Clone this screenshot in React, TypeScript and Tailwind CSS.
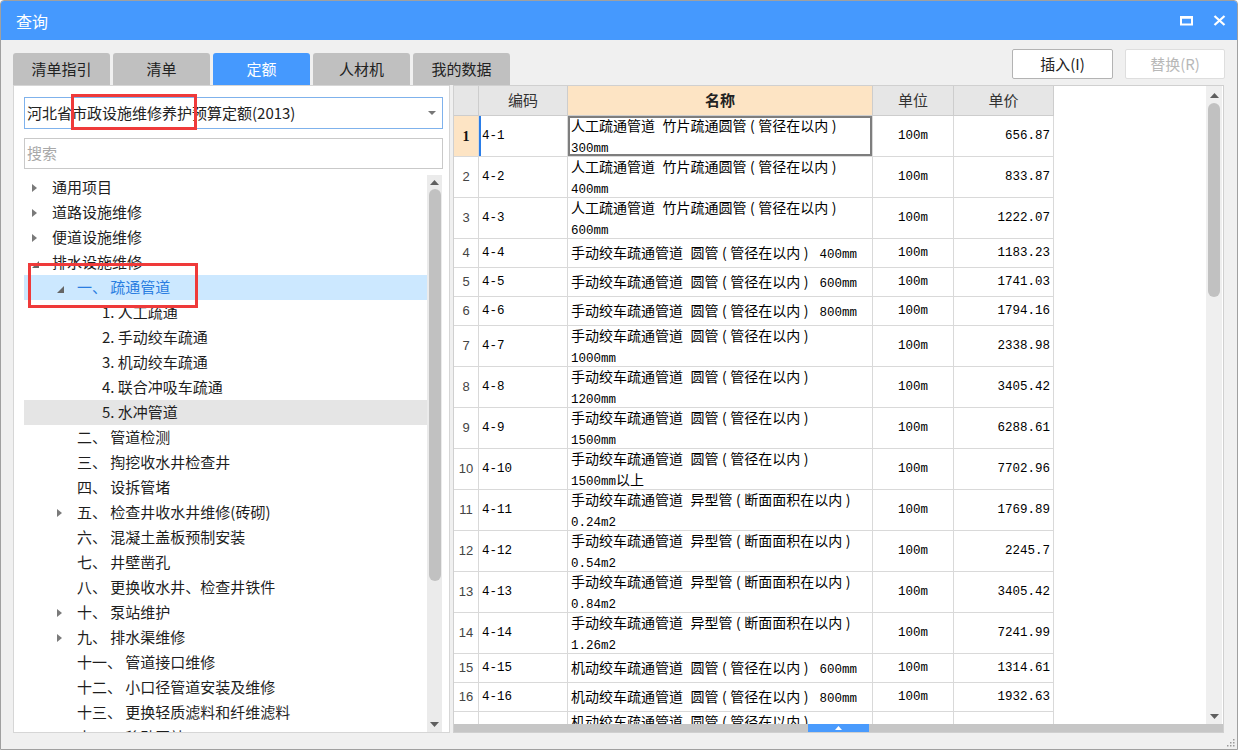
import React from "react";

type TRow = { lv: number; t: string; a?: "c" | "e"; sel?: boolean; hov?: boolean };

const tree: TRow[] = [
  { lv: 0, t: "通用项目", a: "c" },
  { lv: 0, t: "道路设施维修", a: "c" },
  { lv: 0, t: "便道设施维修", a: "c" },
  { lv: 0, t: "排水设施维修", a: "e" },
  { lv: 1, t: "一、 疏通管道", a: "e", sel: true },
  { lv: 2, t: "1. 人工疏通" },
  { lv: 2, t: "2. 手动绞车疏通" },
  { lv: 2, t: "3. 机动绞车疏通" },
  { lv: 2, t: "4. 联合冲吸车疏通" },
  { lv: 2, t: "5. 水冲管道", hov: true },
  { lv: 1, t: "二、 管道检测" },
  { lv: 1, t: "三、 掏挖收水井检查井" },
  { lv: 1, t: "四、 设拆管堵" },
  { lv: 1, t: "五、 检查井收水井维修(砖砌)", a: "c" },
  { lv: 1, t: "六、 混凝土盖板预制安装" },
  { lv: 1, t: "七、 井壁凿孔" },
  { lv: 1, t: "八、 更换收水井、检查井铁件" },
  { lv: 1, t: "十、 泵站维护", a: "c" },
  { lv: 1, t: "九、 排水渠维修", a: "c" },
  { lv: 1, t: "十一、 管道接口维修" },
  { lv: 1, t: "十二、 小口径管道安装及维修" },
  { lv: 1, t: "十三、 更换轻质滤料和纤维滤料" },
  { lv: 1, t: "十四、 移动泵站" },
];

const indent = ["pl-[8px]", "pl-[33px]", "pl-[58px]"];

type DRow = { code: string; l1: string; l2?: string; price: string };

const A = "人工疏通管道 竹片疏通圆管（管径在以内）";
const B = "手动绞车疏通管道 圆管（管径在以内）";
const C = "手动绞车疏通管道 异型管（断面面积在以内）";
const D = "机动绞车疏通管道 圆管（管径在以内）";

const rows: DRow[] = [
  { code: "4-1", l1: A, l2: "300mm", price: "656.87" },
  { code: "4-2", l1: A, l2: "400mm", price: "833.87" },
  { code: "4-3", l1: A, l2: "600mm", price: "1222.07" },
  { code: "4-4", l1: B + " 400mm", price: "1183.23" },
  { code: "4-5", l1: B + " 600mm", price: "1741.03" },
  { code: "4-6", l1: B + " 800mm", price: "1794.16" },
  { code: "4-7", l1: B, l2: "1000mm", price: "2338.98" },
  { code: "4-8", l1: B, l2: "1200mm", price: "3405.42" },
  { code: "4-9", l1: B, l2: "1500mm", price: "6288.61" },
  { code: "4-10", l1: B, l2: "1500mm以上", price: "7702.96" },
  { code: "4-11", l1: C, l2: "0.24m2", price: "1769.89" },
  { code: "4-12", l1: C, l2: "0.54m2", price: "2245.7" },
  { code: "4-13", l1: C, l2: "0.84m2", price: "3405.42" },
  { code: "4-14", l1: C, l2: "1.26m2", price: "7241.99" },
  { code: "4-15", l1: D + " 600mm", price: "1314.61" },
  { code: "4-16", l1: D + " 800mm", price: "1932.63" },
  { code: "4-17", l1: D, l2: "1000mm", price: "2338.98" },
];

function Mixed({ text }: { text: string }) {
  const parts = text.split(/([\x20-\x7E]+|（|）)/).filter((p) => p.length > 0);
  return (
    <>
      {parts.map((p, i) =>
        p === "（" || p === "）" ? (
          <span key={i} className="px-[3.5px] text-[14px]">
            {p === "（" ? "(" : ")"}
          </span>
        ) : /^[\x20-\x7E]+$/.test(p) ? (
          <span key={i} className="font-['Liberation_Mono',monospace] text-[12.5px] whitespace-pre">
            {p}
          </span>
        ) : (
          <span key={i} className="text-[14px]">
            {p}
          </span>
        )
      )}
    </>
  );
}

function ArrowC() {
  return (
    <svg width="5" height="8" viewBox="0 0 5 8">
      <path d="M0 0 L5 4 L0 8 Z" fill="#7a7a7a" />
    </svg>
  );
}
function ArrowE() {
  return (
    <svg width="7" height="7" viewBox="0 0 7 7" className="mt-[3px]">
      <path d="M7 0 L7 7 L0 7 Z" fill="#666" />
    </svg>
  );
}
function Up() {
  return (
    <svg width="9" height="5" viewBox="0 0 9 5">
      <path d="M0 5 L4.5 0 L9 5 Z" fill="#5f5f5f" />
    </svg>
  );
}
function Down() {
  return (
    <svg width="9" height="5" viewBox="0 0 9 5">
      <path d="M0 0 L4.5 5 L9 0 Z" fill="#5f5f5f" />
    </svg>
  );
}

export default function App() {
  return (
    <div className="relative w-[1238px] h-[750px] overflow-hidden bg-[#f0f0f0] border border-[#a0a0a0] rounded-t-[4px] flex flex-col font-['Noto_Sans_CJK_SC','Liberation_Sans',sans-serif] text-[#1e1e1e]">
      {/* Title bar */}
      <div className="h-[39px] shrink-0 bg-[#4599fe] flex items-center pl-[15px] pr-[11px]">
        <span className="text-white text-[16px]">查询</span>
        <div className="ml-auto flex items-center gap-[20px]">
          <svg width="13" height="10" viewBox="0 0 13 10">
            <rect x="1" y="1.5" width="11" height="7" fill="none" stroke="#fff" strokeWidth="2" />
            <rect x="0" y="0" width="13" height="2.5" fill="#fff" />
          </svg>
          <svg width="13" height="11" viewBox="0 0 13 11">
            <path d="M1.5 1 L11.5 10 M11.5 1 L1.5 10" stroke="#fff" strokeWidth="2.3" />
          </svg>
        </div>
      </div>

      {/* Toolbar */}
      <div className="h-[45px] shrink-0 flex pl-[12px] pr-[12px]">
        <div className="self-end flex gap-[3px]">
          {["清单指引", "清单", "定额", "人材机", "我的数据"].map((t) => (
            <div
              key={t}
              className={
                t === "定额"
                  ? "w-[97px] h-[32px] rounded-t-[3px] bg-[#4599fe] text-white text-[15px] flex items-center justify-center"
                  : "w-[97px] h-[32px] rounded-t-[3px] bg-[#c0c0c0] text-[#222] text-[15px] flex items-center justify-center"
              }
            >
              {t}
            </div>
          ))}
        </div>
        <div className="ml-auto self-start mt-[9px] flex gap-[12px]">
          <div className="w-[101px] h-[30px] bg-white border border-[#b3b3b3] rounded-[2px] flex items-center justify-center text-[15px] text-[#222]">
            插入(I)
          </div>
          <div className="w-[100px] h-[30px] bg-white border border-[#dedede] rounded-[2px] flex items-center justify-center text-[15px] text-[#b8b8b8]">
            替换(R)
          </div>
        </div>
      </div>

      {/* Main */}
      <div className="h-[648px] shrink-0 flex gap-[3px] pl-[12px] pr-[13px]">
        {/* Left panel */}
        <div className="w-[437px] bg-white border border-[#d6d6d6] flex flex-col">
          <div className="mt-[11px] ml-[10px] mr-[6px] h-[32px] border border-[#7fb2ec] flex items-center pl-[2px] pr-[6px]">
            <span className="text-[15px] text-[#222]">河北省市政设施维修养护预算定额(2013)</span>
            <svg width="8" height="4" viewBox="0 0 8 4" className="ml-auto">
              <path d="M0 0 L8 0 L4 4 Z" fill="#777" />
            </svg>
          </div>
          <div className="mt-[9px] ml-[10px] mr-[6px] h-[31px] border border-[#c9c9c9] flex items-center pl-[2px]">
            <span className="text-[15px] text-[#a8a8a8]">搜索</span>
          </div>
          <div className="mt-[6px] flex-1 flex ml-[10px] mr-[7px] overflow-hidden">
            <div className="flex-1 flex flex-col overflow-hidden">
              {tree.map((r, i) => (
                <div
                  key={i}
                  className={
                    "h-[25px] shrink-0 flex items-center " +
                    indent[r.lv] +
                    (r.sel ? " bg-[#cce8ff]" : r.hov ? " bg-[#e5e5e5]" : "")
                  }
                >
                  <div className="w-[20px] flex items-center">
                    {r.a === "c" ? <ArrowC /> : r.a === "e" ? <ArrowE /> : null}
                  </div>
                  <span
                    className={
                      "text-[15px] whitespace-pre " + (r.sel ? "text-[#2a7de1]" : "text-[#1e1e1e]")
                    }
                  >
                    {r.t}
                  </span>
                </div>
              ))}
            </div>
            <div className="w-[15px] bg-[#ebebeb] flex flex-col items-center">
              <div className="h-[14px] flex items-center justify-center">
                <Up />
              </div>
              <div className="w-[12px] h-[392px] bg-[#c1c1c1] rounded-full" />
              <div className="mt-auto h-[14px] flex items-center justify-center mb-[1px]">
                <Down />
              </div>
            </div>
          </div>
        </div>

        {/* Right panel */}
        <div className="flex-1 bg-white border border-[#d0d0d0] flex flex-col">
          <div className="flex-1 flex overflow-hidden">
            <div className="flex-1 overflow-hidden">
              {/* Header */}
              <div className="grid grid-cols-[25px_89px_305px_81px_100px] h-[30px]">
                <div className="bg-[#e6e6e6] border-r border-b border-[#cdcdcd]" />
                <div className="bg-[#e6e6e6] border-r border-b border-[#cdcdcd] flex items-center justify-center text-[15px] text-[#333]">
                  编码
                </div>
                <div className="bg-[#fde4c4] border-r border-b border-[#cdcdcd] flex items-center justify-center text-[15px] font-bold text-[#222]">
                  名称
                </div>
                <div className="bg-[#e6e6e6] border-r border-b border-[#cdcdcd] flex items-center justify-center text-[15px] text-[#333]">
                  单位
                </div>
                <div className="bg-[#e6e6e6] border-r border-b border-[#cdcdcd] flex items-center justify-center text-[15px] text-[#333]">
                  单价
                </div>
              </div>
              {rows.map((r, i) => {
                const first = i === 0;
                return (
                  <div
                    key={r.code}
                    className={
                      "grid grid-cols-[25px_89px_305px_81px_100px] " + (r.l2 ? "h-[41px]" : "h-[29px]")
                    }
                  >
                    <div
                      className={
                        "border-r border-b border-[#d9d9d9] flex items-center justify-center " +
                        (first
                          ? "bg-[#fde4c4] font-['Liberation_Serif',serif] font-bold text-[14px] text-[#111]"
                          : "font-['Liberation_Sans',sans-serif] text-[13px] text-[#444]")
                      }
                    >
                      {i + 1}
                    </div>
                    <div className="relative border-r border-b border-[#d9d9d9] flex items-center pl-[3px] font-['Liberation_Mono',monospace] text-[12.5px] text-black">
                      {first && <div className="absolute left-0 top-0 bottom-0 w-[2px] bg-[#2a7de8]" />}
                      {r.code}
                    </div>
                    <div className="relative border-r border-b border-[#d9d9d9] flex flex-col justify-center pl-[3px] text-black overflow-hidden">
                      {first && <div className="absolute inset-0 border-2 border-[#7e7e7e]" />}
                      <div className="leading-[18px] whitespace-nowrap">
                        <Mixed text={r.l1} />
                      </div>
                      {r.l2 && (
                        <div className="leading-[17px] whitespace-nowrap">
                          <Mixed text={r.l2} />
                        </div>
                      )}
                    </div>
                    <div className="border-r border-b border-[#d9d9d9] flex items-center justify-center font-['Liberation_Mono',monospace] text-[12.5px] text-black">
                      100m
                    </div>
                    <div className="border-r border-b border-[#d9d9d9] flex items-center justify-end pr-[3px] font-['Liberation_Mono',monospace] text-[12.5px] text-black">
                      {r.price}
                    </div>
                  </div>
                );
              })}
            </div>
            <div className="w-[16px] mr-[1px] bg-[#efefef] flex flex-col items-center">
              <div className="h-[16px] flex items-center justify-center mt-[1px]">
                <Up />
              </div>
              <div className="w-[12px] h-[194px] bg-[#c1c1c1] rounded-full" />
              <div className="mt-auto h-[14px] flex items-center justify-center mb-[1px]">
                <Down />
              </div>
            </div>
          </div>
          <div className="h-[8px] shrink-0 bg-[#c6c6c6] flex">
            <div className="ml-[354px] w-[61px] h-full bg-[#4a9bfd] flex items-center justify-center">
              <svg width="7" height="4" viewBox="0 0 7 4">
                <path d="M0 4 L3.5 0 L7 4 Z" fill="#fff" />
              </svg>
            </div>
          </div>
        </div>
      </div>

      {/* Bottom strip */}
      <div className="flex-1" />

      {/* resize grip */}
      <svg className="absolute right-[2px] bottom-[2px]" width="9" height="9" viewBox="0 0 9 9">
        <rect x="7" y="1" width="1.5" height="1.5" fill="#9a9a9a" />
        <rect x="4" y="4" width="1.5" height="1.5" fill="#9a9a9a" />
        <rect x="7" y="4" width="1.5" height="1.5" fill="#9a9a9a" />
        <rect x="1" y="7" width="1.5" height="1.5" fill="#9a9a9a" />
        <rect x="4" y="7" width="1.5" height="1.5" fill="#9a9a9a" />
        <rect x="7" y="7" width="1.5" height="1.5" fill="#9a9a9a" />
      </svg>

      {/* Red annotation boxes */}
      <div className="absolute left-[70px] top-[93px] w-[126px] h-[36px] border-[3px] border-[#ef3a3a]" />
      <div className="absolute left-[27px] top-[262px] w-[170px] h-[45px] border-[3px] border-[#ef3a3a]" />
    </div>
  );
}
